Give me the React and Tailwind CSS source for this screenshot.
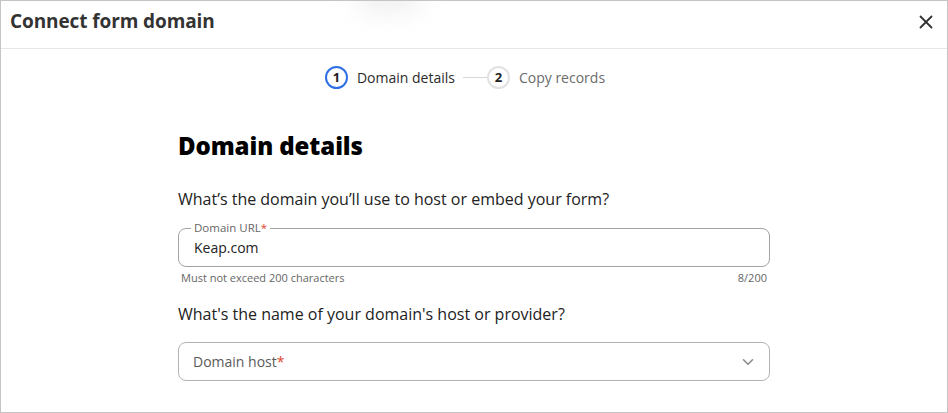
import { ChevronDown, X } from 'lucide-react';

const font = { fontFamily: '"Open Sans", "Liberation Sans", sans-serif' };

function Step({ n, label, active }) {
    return (
        <div className="flex items-center gap-[9px]">
            <span className={`flex h-[23px] w-[23px] items-center justify-center rounded-full border-2 text-[13px] font-bold text-[#222] ${active ? 'border-[#2f6fe4]' : 'border-[#e2e2e2]'}`}>{n}</span>
            <span className={`text-[14px] ${active ? 'text-[#2b2b2b]' : 'text-[#6b6b6b]'}`}>{label}</span>
        </div>
    );
}

export default function App() {
    return (
        <div className="relative h-[413px] w-[948px] overflow-hidden border border-[#c4c4c4] bg-white" style={font}>
            <div className="pointer-events-none absolute left-[355px] top-[-22px] h-[34px] w-[65px] rounded-full bg-[#e2e2e2] opacity-50 blur-md" />

            <div className="flex h-[48px] items-center justify-between border-b border-[#e6e6e6] pb-[6px] pl-[9px] pr-[10px]">
                <h2 className="text-[19px] font-bold tracking-[-0.1px] text-[#333]">Connect form domain</h2>
                <X className="h-[22px] w-[22px] text-[#333]" strokeWidth={2} />
            </div>

            <div className="flex items-center justify-center pr-[18px] pt-[17px]">
                <Step n="1" label="Domain details" active />
                <span className="ml-[8px] h-px w-[24px] bg-[#d6d6d6]" />
                <Step n="2" label="Copy records" />
            </div>

            <div className="mx-auto w-[592px] pt-[42px]">
                <h1 className="text-[24px] font-extrabold leading-[30px] tracking-[-0.1px] text-black">Domain details</h1>

                <p className="mt-[27px] text-[16px] leading-[22px] text-[#222]">What’s the domain you’ll use to host or embed your form?</p>

                <fieldset className="mt-[11px] h-[46px] rounded-lg border border-[#a3a3a3] px-[12px]">
                    <legend className="px-[3px] text-[11.5px] leading-[14px] text-[#666]">Domain URL<span className="text-[#e0442c]">*</span></legend>
                    <div className="pl-[3px] pt-[2px] text-[14px] leading-[22px] text-[#222]">Keap.com</div>
                </fieldset>
                <div className="mt-[3px] flex justify-between px-[3px] text-[11px] leading-[16px] text-[#666]">
                    <span>Must not exceed 200 characters</span>
                    <span>8/200</span>
                </div>

                <p className="mt-[17px] text-[16px] leading-[22px] text-[#222]">What's the name of your domain's host or provider?</p>

                <div className="mt-[17px] flex h-[39px] items-center justify-between rounded-lg border border-[#b3b3b3] pl-[14px] pr-[12px]">
                    <span className="text-[14px] text-[#5a5a5a]">Domain host<span className="text-[#e0442c]">*</span></span>
                    <ChevronDown className="h-[18px] w-[18px] text-[#888]" strokeWidth={2} />
                </div>
            </div>
        </div>
    );
}
